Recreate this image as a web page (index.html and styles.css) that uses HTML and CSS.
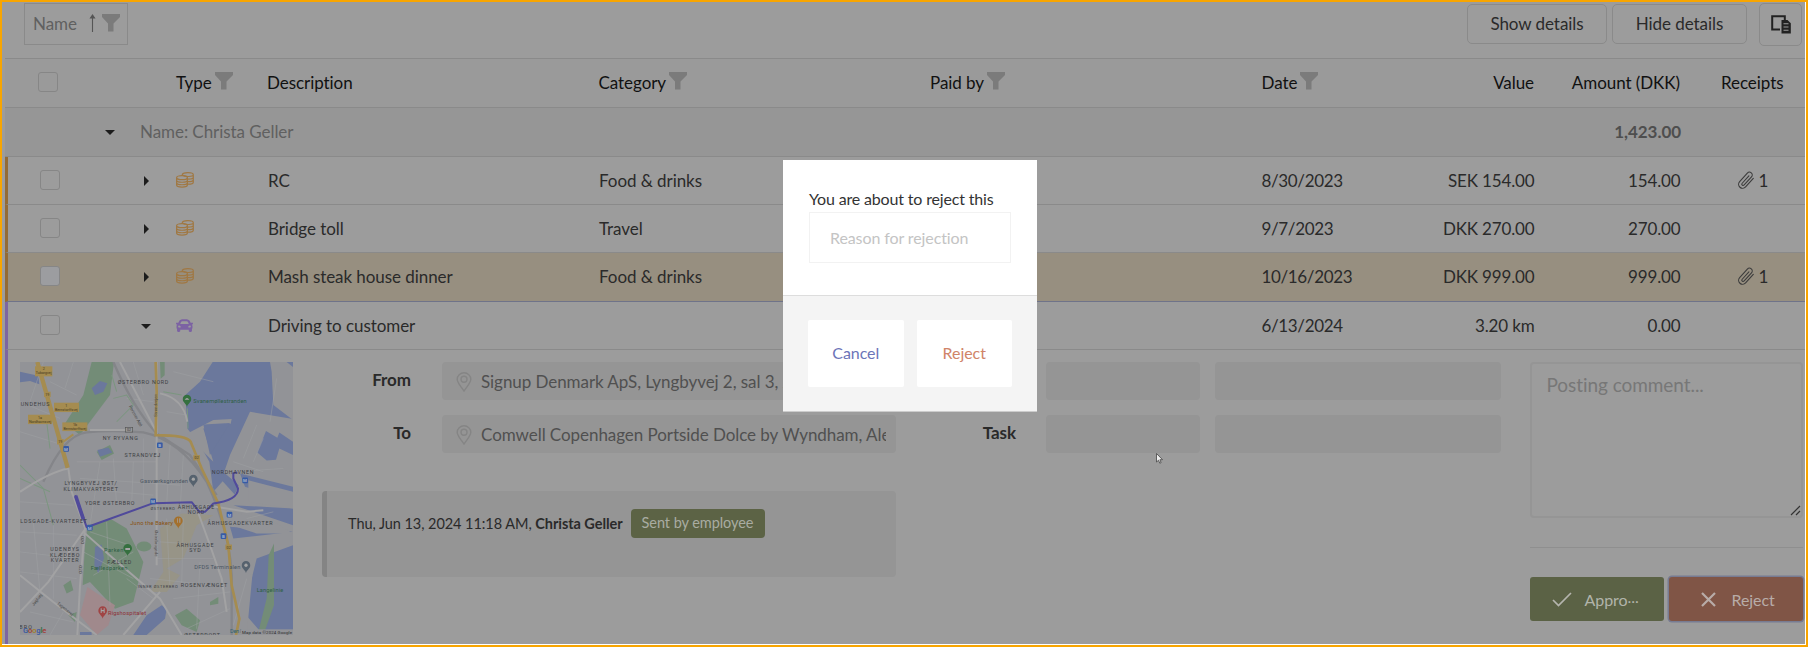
FILE: index.html
```html
<!DOCTYPE html>
<html lang="en">
<head>
<meta charset="utf-8">
<title>Expense approval</title>
<link rel="stylesheet" href="styles.css">
</head>
<body>
<svg class="defs" width="0" height="0">
  <symbol id="funnel" viewBox="0 0 18 18"><path d="M0 0h18v3L11.5 9.500V17.500h-5.500V9.500L0 3z"/></symbol>
  <symbol id="coins" viewBox="0 0 18 16"><g fill="none" stroke="currentColor" stroke-width="1.200"><ellipse cx="6" cy="5.700" rx="5.400" ry="2"/><path d="M.6 5.700v7.300c0 2.700 10.800 2.700 10.800 0V5.700M.6 8.200c0 2.700 10.800 2.700 10.800 0M.6 10.700c0 2.700 10.800 2.700 10.800 0"/><path d="M6.300 3.200V2.700C6.300 0 17.300 0 17.300 2.700v7.500c0 1-2.300 2-5.300 2M6.800 3.300c2 1.700 10.500 1.600 10.500-.5M12 7.100c3 0 5.300-.7 5.300-1.900M12 9.700c3 0 5.300-.8 5.300-2"/></g></symbol>
  <symbol id="car" viewBox="0 64 512 384"><path d="M499.990 176h-59.870l-16.640-41.600C406.380 91.630 365.570 64 319.500 64h-127c-46.060 0-86.880 27.630-103.990 70.400L71.870 176H12.010C4.200 176-1.530 183.340.37 190.910l6 24C7.700 220.250 12.500 224 18.010 224h20.070C24.650 235.730 16 252.780 16 272v48c0 16.120 6.160 30.670 16 41.930V416c0 17.670 14.330 32 32 32h32c17.670 0 32-14.330 32-32v-32h256v32c0 17.670 14.330 32 32 32h32c17.670 0 32-14.330 32-32v-54.070c9.840-11.250 16-25.800 16-41.930v-48c0-19.220-8.650-36.270-22.070-48H494c5.510 0 10.310-3.750 11.640-9.090l6-24c1.890-7.570-3.840-14.910-11.650-14.910zm-352.060-17.830c7.290-18.220 24.940-30.170 44.570-30.170h127c19.630 0 37.280 11.950 44.570 30.170L384 208H128l19.930-49.830zM96 319.800c-19.200 0-32-12.760-32-31.900S76.800 256 96 256s48 28.710 48 47.850-28.800 15.950-48 15.950zm320 0c-19.200 0-48 3.190-48-15.950S396.800 256 416 256s32 12.760 32 31.900-12.800 31.900-32 31.900z"/></symbol>
  <symbol id="clip" viewBox="0 0 17 18"><path d="M4 -6V5.500a4 4 0 0 1-8 0V-6a2.800 2.800 0 0 1 5.600 0V5a1.300 1.300 0 0 1-2.600 0V-5" transform="translate(8.300 9.200) rotate(42)" fill="none" stroke="currentColor" stroke-width="1.100" stroke-linecap="round"/></symbol>
  <symbol id="pin" viewBox="0 0 16 20"><path d="M8 19C5 14.500 1.200 11 1.200 7.300a6.800 6.500 0 0 1 13.600 0C14.800 11 11 14.500 8 19z" fill="none" stroke="currentColor" stroke-width="1.400"/><circle cx="8" cy="7.300" r="3" fill="none" stroke="currentColor" stroke-width="1.400"/></symbol>
  <symbol id="drop" viewBox="-14 -15 28 40"><path d="M0 24C-2 14-13 10-13 0a13 13 0 0 1 26 0C13 10 2 14 0 24z"/></symbol>
</svg>

<div class="frame">
  <div class="page">
    <div class="toolbar">
      <div class="group-chip"><span>Name</span><svg class="sort" viewBox="0 0 7 18"><path d="M3.500 18V3M3.500 1 1.500 4h4z" fill="currentColor" stroke="currentColor" stroke-width="1.100"/></svg><svg class="funnel"><use href="#funnel"/></svg></div>
      <div class="tools">
        <div class="btn show">Show details</div>
        <div class="btn hide">Hide details</div>
        <div class="btn chooser"><svg viewBox="0 0 20 19" width="20" height="19"><path d="M9 14.500H1.200V1.200h12.600V5" fill="none" stroke="#222" stroke-width="2"/><path d="M10.500 5h6l3.300 3.300V18.500h-9.300z" fill="#222"/><path d="M12.500 8.700h5M12.500 12h5M12.500 15.300h5" stroke="#9c9c9c" stroke-width="1.100"/></svg></div>
      </div>
    </div>

    <div class="row head">
      <div class="cell pick"><i class="box"></i></div>
      <div class="cell"></div>
      <div class="cell">Type<svg class="funnel"><use href="#funnel"/></svg></div>
      <div class="cell">Description</div>
      <div class="cell">Category<svg class="funnel"><use href="#funnel"/></svg></div>
      <div class="cell">Paid by<svg class="funnel"><use href="#funnel"/></svg></div>
      <div class="cell">Date<svg class="funnel"><use href="#funnel"/></svg></div>
      <div class="cell num">Value</div>
      <div class="cell num">Amount (DKK)</div>
      <div class="cell rec">Receipts</div>
    </div>

    <div class="group">
      <i class="caret down"></i><span class="gname">Name: Christa Geller</span><span class="gsum">1,423.00</span>
    </div>

    <div class="row item">
      <div class="cell pick"><i class="box"></i></div><div class="cell exp"><i class="caret"></i></div>
      <div class="cell"><svg class="coins"><use href="#coins"/></svg></div>
      <div class="cell">RC</div><div class="cell">Food &amp; drinks</div><div class="cell"></div><div class="cell date">8/30/2023</div>
      <div class="cell num">SEK 154.00</div><div class="cell num">154.00</div>
      <div class="cell clipc"><svg class="clip"><use href="#clip"/></svg>1</div>
    </div>
    <div class="row item">
      <div class="cell pick"><i class="box"></i></div><div class="cell exp"><i class="caret"></i></div>
      <div class="cell"><svg class="coins"><use href="#coins"/></svg></div>
      <div class="cell">Bridge toll</div><div class="cell">Travel</div><div class="cell"></div><div class="cell date">9/7/2023</div>
      <div class="cell num">DKK 270.00</div><div class="cell num">270.00</div><div class="cell"></div>
    </div>
    <div class="row item marked">
      <div class="cell pick"><i class="box"></i></div><div class="cell exp"><i class="caret"></i></div>
      <div class="cell"><svg class="coins"><use href="#coins"/></svg></div>
      <div class="cell">Mash steak house dinner</div><div class="cell">Food &amp; drinks</div><div class="cell"></div><div class="cell date">10/16/2023</div>
      <div class="cell num">DKK 999.00</div><div class="cell num">999.00</div>
      <div class="cell clipc"><svg class="clip"><use href="#clip"/></svg>1</div>
    </div>
    <div class="row item drive">
      <div class="cell pick"><i class="box"></i></div><div class="cell exp"><i class="caret down"></i></div>
      <div class="cell"><svg class="car"><use href="#car"/></svg></div>
      <div class="cell">Driving to customer</div><div class="cell"></div><div class="cell"></div><div class="cell date">6/13/2024</div>
      <div class="cell num">3.20 km</div><div class="cell num">0.00</div><div class="cell"></div>
    </div>

    <div class="detail">
      <svg class="map" viewBox="60 51 819 818" width="273" height="273" preserveAspectRatio="none">
        <rect x="60" y="51" width="819" height="818" fill="#929397"/>
        <g fill="#6b789c">
          <path d="M638 51H879V330L838 310 828 344 800 346 772 322 798 258 832 278 838 262 879 290V222L750 200 690 330 672 382 716 420 704 448 668 408 640 440 628 350 600 300 562 250 556 150 600 110z"/>
          <path d="M720 385 879 425V470L735 425zM700 480 879 490V540L760 500zM690 545 879 560V600L770 640 730 800 790 869H879V560L700 580z"/>
          <path d="M60 80 115 92 118 118 90 108 60 112zM440 810 485 780 500 790 495 820 440 869H400zM240 860h35v9h-35z"/>
        </g>
        <g fill="#929397">
          <path d="M810 51H860L879 66V225L820 180 815 80zM700 500 830 535 879 565 770 565 695 540zM745 405 879 440 879 490 745 470zM695 640 725 640 740 680 757 690 740 869H690zM562 265 640 225 695 222 692 236 610 250 640 350 590 300z"/>
          <path d="M610 238 690 234 630 330z" fill="#6b789c"/>
        </g>
        <g fill="#738c77">
          <path d="M275 51H342L330 150 240 270 195 235 250 150zM263 545 330 520 380 550 430 650 400 770 345 790 270 710 248 720 255 600z"/>
          <ellipse cx="432" cy="604" rx="22" ry="15"/>
          <path d="M806 630 822 595V780L790 869 775 860 800 760zM190 720 212 705 220 735 200 745zM525 810 560 790 600 825 590 860 545 840zM205 810 230 800 225 830zM630 770l25-15v20l-25 5zM480 51h14v40l-12 10zM290 320 330 300 342 325 305 345z"/>
          <path d="M292 315 325 307 337 322 300 335zM275 130 300 108 322 115 310 140 285 150zM285 605 305 598 312 640 295 685 283 660z" fill="#6b789c"/>
        </g>
        <path d="M262 725 345 780 325 840 290 869 240 810z" fill="#a0898c"/>
        <path d="M480 550 545 505 640 510 590 540 550 640 500 670 540 690 500 740 450 740 490 680z" fill="#979487"/>
        <g fill="none" stroke="#a0a1a4" stroke-width="2" opacity=".7">
          <path d="M60 170 180 220M60 260 190 300M150 110 230 150M130 51 90 170M220 51 195 130M230 350 470 350M240 400 540 420M240 430 460 450M300 350 270 540M340 340 350 480M400 350 395 480M430 280 430 470M510 300 500 480M550 330 540 500M60 560 230 570M60 620 230 640M60 680 230 700M100 530 120 740M160 520 160 760M60 470 220 480M500 520 510 730M550 520 545 720M600 650 590 850M470 640 640 640M480 590 630 600M450 700 640 720M520 760 690 740M560 850 690 790M90 800 220 830M150 869 190 800M520 80 640 110M500 200 560 210M380 160 460 170M400 51 430 150M700 350 790 380M770 240 730 340M830 100 810 230M700 380 850 370M790 280 760 350M820 500 740 520M380 700 460 760M740 700 700 840M270 560 390 600M280 690 400 620M250 620 400 700M320 530 330 780"/>
        </g>
        <g fill="none" stroke="#7b967f" stroke-width="3"><path d="M60 360 130 430 160 540M60 400 150 440M140 230 150 310M340 160 380 150 400 180 350 230M335 90 350 140M490 140 545 150M562 190 564 250"/></g>
        <g fill="none" stroke="#848589" stroke-width="7"><path d="M130 410Q190 270 260 262T430 262Q540 285 620 410 690 560 695 690V869M340 51Q400 190 470 265L570 330 650 450"/></g>
        <g fill="none" stroke="#a2a2a3">
          <path d="M60 440Q150 380 205 370L215 440 255 548 240 720 232 869M250 560 340 640 480 760 545 869M60 690 160 770 290 869M60 800 145 710 255 552M360 51 470 262M470 51V600L470 660M590 490 630 600 665 700 680 800M270 255H385M480 145Q550 160 562 230M370 869 480 740M620 480 740 500 790 495" stroke-width="6"/>
        </g>
        <g fill="none" stroke="#a58c50"><path d="M112 51 175 270 203 368" stroke-width="13"/><path d="M467 51 470 140 467 270Q560 270 572 290L605 370 655 475 685 600 695 720 718 820 708 869" stroke-width="8"/><path d="M190 290 220 268" stroke-width="6"/></g>
        <g stroke="#504a9b" fill="none" stroke-linejoin="round"><path d="M226 450 260 546 460 474 575 471 598 500 615 500 640 475Q715 465 714 430L700 400V384L712 382" stroke-width="6"/><path d="M227 452 250 522" stroke-width="11"/></g>
        <g class="sign"><rect x="105" y="64" width="52" height="30"/><rect x="162" y="173" width="75" height="28"/><rect x="84" y="209" width="72" height="28"/><rect x="187" y="232" width="75" height="26"/><rect x="132" y="140" width="20" height="16"/><rect x="171" y="282" width="20" height="16"/><rect x="580" y="330" width="20" height="16"/><rect x="676" y="598" width="20" height="16"/></g>
        <g class="tiny"><text x="131" y="88">Tuborgvej</text><text x="131" y="75">2</text><text x="199" y="199">Bernstorffsvej</text><text x="199" y="185">1</text><text x="120" y="235">Nordhavnsvej</text><text x="120" y="221">1a</text><text x="225" y="256">Bernstorffsvej</text><text x="225" y="243">1b</text><text x="142" y="153">19</text><text x="181" y="295">19</text><text x="590" y="343">02</text><text x="686" y="611">02</text></g>
        <rect x="376" y="247" width="22" height="14" fill="#999" stroke="#555" stroke-width="2"/><text x="387" y="259" class="tinyd">02</text>
        <g fill="#365ba5"><rect x="190" y="303" width="17" height="17" rx="3"/><rect x="471" y="292" width="17" height="17" rx="3"/><rect x="451" y="460" width="17" height="17" rx="3"/><rect x="261" y="539" width="17" height="17" rx="3"/><rect x="727" y="397" width="17" height="17" rx="3"/><rect x="680" y="500" width="17" height="17" rx="3"/><rect x="662" y="564" width="17" height="17" rx="3"/></g>
        <g class="metro"><text x="198" y="317">M</text><text x="479" y="306">B</text><text x="459" y="474">M</text><text x="269" y="553">M</text><text x="735" y="411">M</text><text x="688" y="514">M</text><text x="670" y="578">B</text></g>
        <g class="area">
          <text x="429" y="118" textLength="152">ØSTERBRO NORD</text><text x="105" y="182" textLength="86">UNDEHUS</text><text x="361" y="286" textLength="105">NY RYVANG</text><text x="427" y="335" textLength="107">STRANDVEJ</text><text x="272" y="421" textLength="157">LYNGBYVEJ ØST/</text><text x="272" y="438" textLength="163">KLIMAKVARTERET</text><text x="329" y="480" textLength="148">YDRE ØSTERBRO</text><text x="161" y="533" textLength="200">LDSGADE-KVARTERET</text><text x="194" y="617" textLength="86">UDENBYS</text><text x="194" y="634" textLength="88">KLÆDEBO</text><text x="194" y="650" textLength="84">KVARTER</text><text x="358" y="655" textLength="72">FÆLLED</text><text x="588" y="490" textLength="109">ÅRHUSGADE</text><text x="588" y="505" textLength="50">NORD</text><text x="698" y="386" textLength="126">NORDHAVNEN</text><text x="720" y="538" textLength="195">ÅRHUSGADEKVARTER</text><text x="585" y="604" textLength="111">ÅRHUSGADE</text><text x="585" y="620" textLength="34">SYD</text><text x="612" y="726" textLength="139">ROSENVÆNGET</text><text x="606" y="876" textLength="107">ØSTERPORT</text><text x="77" y="852" textLength="38">BRO</text>
          <text class="sm" x="488" y="495" textLength="73">ØSTERBRO</text><text class="sm" x="473" y="727" textLength="120">INNER ØSTERBRO</text>
        </g>
        <g class="street"><text transform="translate(472 215) rotate(-90)">Strandvejen</text><text transform="translate(386 184) rotate(61)">Perimer Allé</text><text transform="translate(464 555) rotate(90)">Østerbrogade</text><text transform="translate(243 572) rotate(90)">O2O</text><text transform="translate(238 660) rotate(90)">O2O</text><text transform="translate(101 783) rotate(-52)">Jagtvej</text><text transform="translate(170 776) rotate(38)">Tagensvej</text></g>
        <g><use href="#drop" x="547" y="147" width="28" height="40" fill="#35703f"/><use href="#drop" x="369" y="594" width="28" height="40" fill="#35703f"/><use href="#drop" x="566" y="387" width="28" height="40" fill="#56626e"/><use href="#drop" x="724" y="645" width="28" height="40" fill="#56626e"/><use href="#drop" x="521" y="512" width="28" height="40" fill="#a4702c"/><use href="#drop" x="294" y="781" width="28" height="40" fill="#a04444"/></g>
        <g fill="#a5a5a5"><circle cx="580" cy="402" r="5"/><circle cx="738" cy="660" r="5"/><path d="M554 164q7-11 14 0zM376 608h14v6h-14zM531 519h2v14h-2zM538 519h3v14h-3zM302 789h3v5h6v-5h3v14h-3v-5h-6v5h-3z"/></g>
        <g class="poi"><text x="580" y="175" textLength="160" fill="#2f6046">Svanemøllestranden</text><text x="420" y="414" textLength="144" fill="#4a5562">Gasværksgrunden</text><text x="391" y="539" textLength="128" fill="#885010">Juno the Bakery</text><text x="312" y="621" textLength="58" fill="#2f6046">Parken</text><text x="272" y="675" textLength="110" fill="#2f6046">Fælledparken</text><text x="583" y="671" textLength="138" fill="#4a5562">DFDS Terminalen</text><text x="324" y="808" textLength="114" fill="#8c3036">Rigshospitalet</text><text x="770" y="741" textLength="80" fill="#2f6046">Langelinie</text><text x="690" y="862" textLength="34" fill="#2d6270">Den l</text></g>
        <rect x="722" y="852" width="157" height="17" fill="#929397"/><text x="726" y="865" textLength="150" class="credit">Map data ©2024 Google</text>
        <text x="69" y="863" class="google" textLength="70"><tspan fill="#3758a0">G</tspan><tspan fill="#a23a33">o</tspan><tspan fill="#a1801c">o</tspan><tspan fill="#3758a0">g</tspan><tspan fill="#32713f">l</tspan><tspan fill="#a23a33">e</tspan></text>
      </svg>

      <div class="trip">
        <div class="field"><label>From</label><div class="input"><svg class="pin"><use href="#pin"/></svg><span>Signup Denmark ApS, Lyngbyvej 2, sal 3, 2100 København</span></div></div>
        <div class="field"><label>To</label><div class="input"><svg class="pin"><use href="#pin"/></svg><span>Comwell Copenhagen Portside Dolce by Wyndham, Alexandriagade</span></div></div>
        <div class="log"><span class="when">Thu, Jun 13, 2024 11:18 AM, <b>Christa Geller</b></span><span class="badge">Sent by employee</span></div>
      </div>

      <div class="dims">
        <label></label><div class="input"></div><div class="input"></div>
        <label>Task</label><div class="input"></div><div class="input"></div>
      </div>

      <div class="decide">
        <div class="comment">Posting comment...<svg class="grip" viewBox="0 0 11 11"><path d="M1 10 10 1M6 10l4-4" stroke="#333" stroke-width="1.200"/></svg></div>
        <div class="rule"></div>
        <div class="actions">
          <div class="act ok"><svg width="20" height="15" viewBox="0 0 20 15"><path d="M1 8l5.500 5.500L19 1" fill="none" stroke="#b5b5ae" stroke-width="1.700"/></svg><span>Appro<span class="dots">...</span></span></div>
          <div class="act no"><svg width="15" height="15" viewBox="0 0 15 15"><path d="M1 1l13 13M14 1 1 14" fill="none" stroke="#b8aca8" stroke-width="2.200"/></svg><span>Reject</span></div>
        </div>
      </div>
    </div>
  </div>
</div>

<div class="modal">
  <div class="modal-body">
    <div class="msg">You are about to reject this</div>
    <div class="reason">Reason for rejection</div>
  </div>
  <div class="modal-foot"><div class="mbtn cancel">Cancel</div><div class="mbtn reject">Reject</div></div>
</div>
<svg class="cursor" viewBox="0 0 7 11"><path d="M.5.5v8.500l2-1.800 1.300 3 1.300-.6L3.900 6.700h2.600z" fill="#eee" stroke="#444" stroke-width=".8"/></svg>
</body>
</html>
```

FILE: styles.css
```css
* { box-sizing: border-box; }
body { margin: 0; font-family: Lato, sans-serif; font-size: 17px; letter-spacing: -.06px; color: #2a2a2a; overflow: hidden; }
.defs { position: absolute; }
.frame { width: 1808px; height: 647px; border: 2px solid #f8a500; background: #fff; }
.page { width: 1803px; height: 642px; background: #9c9c9c; padding-left: 3px; display: flex; flex-direction: column; }

.toolbar { height: 57px; border-bottom: 1px solid #8a8a8a; display: flex; justify-content: space-between; align-items: flex-start; padding: 1px 3px 0 19px; flex: none; }
.group-chip { width: 104px; height: 42px; border: 1px solid #8a8a8a; display: flex; align-items: center; padding: 0 0 1px 8px; color: #606060; }
.sort { width: 7px; height: 18px; margin: 0 6px 1px 12px; color: #555; flex: none; }
.funnel { width: 18px; height: 18px; fill: #7b7b7b; flex: none; margin-bottom: 2px; }
.row .funnel { margin-left: 3px; }
.tools { display: flex; }
.btn { border: 1px solid #8a8a8a; border-radius: 5px; display: flex; align-items: center; justify-content: center; height: 40px; margin-top: 1px; padding-bottom: 2px; }
.show { width: 140px; margin-right: 5px; }
.hide { width: 135px; margin-right: 12px; }
.chooser { width: 43px; height: 43px; margin-top: 0; padding-bottom: 0; }

.row { display: grid; grid-template-columns: 130px 41px 91px 331.5px 331.5px 331.5px 133px 139.5px 146px 1fr; height: 48px; border-bottom: 1px solid #8a8a8a; flex: none; }
.cell { display: flex; align-items: center; white-space: nowrap; padding-bottom: 1px; }
.num { justify-content: flex-end; }
.head { height: 49px; color: #111; background: #9a9a9a; }
.head .cell { padding-bottom: 2px; }
.rec { padding-left: 41px; }
.box { width: 20px; height: 20px; border: 1px solid #868686; border-radius: 3px; margin-left: 33px; }
.group { height: 49px; background: #969696; border-bottom: 1px solid #8a8a8a; display: flex; align-items: center; color: #606060; flex: none; padding: 0 124px 1px 100px; }
.gname { margin-left: 25px; flex: 1; }
.gsum { font-weight: bold; color: #4e4e4e; }
.caret { width: 0; height: 0; border: 5px solid transparent; border-left-color: #1c1c1c; border-right: 0; position: relative; top: 1px; }
.caret.down { border: 5px solid transparent; border-top-color: #1c1c1c; border-bottom: 0; }
.item { border-left: 3px solid #946b35; grid-template-columns: 127px 41px 92px 331px 331.5px 331px 132.500px 140.5px 146px 1fr; }
.item .box { margin-left: 32px; }
.item .exp { padding-left: 9px; }
.item .caret.down { margin-left: -3px; }
.date { letter-spacing: -.35px; }
.item .num { letter-spacing: -.15px; }
.marked { background: #978f80; height: 49px; border-bottom-color: #6f7389; }
.marked .cell { padding-bottom: 2px; }
.marked .box { background: #9c9da0; }
.drive { border-left-color: #7d66a0; }
.coins { width: 18px; height: 16px; color: #a07843; margin-bottom: 1px; }
.car { width: 17px; height: 13px; fill: #7c62a3; }
.clipc { padding-left: 57px; }
.clip { width: 17px; height: 18px; margin-right: 4px; color: #3c3c3c; }

.detail { flex: 1; border-left: 3px solid #7d66a0; padding: 12px 3px 0 12px; display: flex; align-items: flex-start; }
.map { flex: none; margin-right: 29px; font-family: Roboto, sans-serif; letter-spacing: 0; }
.area text { font-size: 16px; font-weight: 400; fill: #3c3e42; text-anchor: middle; }
.area .sm { font-size: 12px; }
.sign rect { fill: #a58c50; }
.tiny text { font-size: 11px; fill: #44381c; text-anchor: middle; }
.tinyd { font-size: 11px; fill: #333; text-anchor: middle; }
.metro text { font-size: 13px; fill: #a9b4c8; text-anchor: middle; font-weight: bold; }
.street text { font-size: 13px; fill: #4a4a4a; }
.poi text { font-size: 17px; }
.credit { font-size: 13px; fill: #2a2a2a; }
.google { font-size: 23px; font-weight: 500; }

.trip { width: 574px; flex: none; }
.field { display: flex; height: 38px; margin-bottom: 15px; }
.field label { width: 89px; margin-right: 31px; text-align: right; line-height: 35px; font-weight: bold; }
.input { background: #959595; border-radius: 4px; }
.field .input { flex: 1; min-width: 0; display: flex; align-items: center; padding: 0 10px 0 14px; color: #505050; }
.field span { flex: 1; overflow: hidden; white-space: nowrap; }
.pin { width: 16px; height: 20px; color: #858585; margin: 2px 9px 0 0; flex: none; }
.log { height: 86px; margin-top: 38px; background: #959595; border-left: 5px solid #848484; border-radius: 4px; padding: 18px 0 0 21px; display: flex; align-items: flex-start; font-size: 14.500px; }
.when { line-height: 29px; margin-right: 8px; white-space: nowrap; }
.badge { width: 134px; height: 29px; line-height: 28px; text-align: center; background: #5c6345; color: #a9aca2; border-radius: 4px; }

.dims { display: grid; grid-template-columns: 134.500px 154px 286px; grid-auto-rows: 38px; row-gap: 15px; column-gap: 15px; margin-right: 29px; flex: none; }
.dims label { width: 120px; text-align: right; line-height: 35px; font-weight: bold; }

.decide { width: 273px; flex: none; }
.comment { position: relative; height: 156px; border: 2px solid #959595; border-radius: 4px; padding: 9px 0 0 15px; font-size: 19px; line-height: 24px; color: #777; }
.grip { position: absolute; right: 0; bottom: 0; width: 11px; height: 11px; }
.rule { height: 1px; background: #8f8f8f; margin: 29px 0; }
.actions { display: flex; gap: 5px; }
.act { width: 134px; height: 44px; border-radius: 3px; display: flex; align-items: center; font-size: 16px; }
.act.ok { background: #5b6245; color: #b1b4aa; padding-left: 22px; gap: 13px; }
.act.no { background: #805546; color: #b8aca8; padding-left: 32px; gap: 16px; box-shadow: 0 0 0 1.500px #777b92; }
.dots { position: relative; top: -3px; }

.modal { position: absolute; left: 783px; top: 160px; width: 254px; height: 252px; background: #fff; border-bottom: 1px solid #ccc; font-size: 16px; }
.modal-body { height: 136px; border-bottom: 1px solid #ddd; padding: 28px 26px 0; }
.msg { line-height: 22px; height: 24px; color: #333; white-space: nowrap; letter-spacing: -.16px; }
.reason { width: 202px; height: 51px; border: 1px solid #f2f2f2; line-height: 49px; padding-left: 20px; color: #c4c4c4; letter-spacing: -.1px; }
.modal-foot { height: 115px; background: #f4f4f4; display: flex; align-items: flex-start; gap: 13px; padding: 24px 25px 0; }
.mbtn { height: 67px; line-height: 66px; text-align: center; background: #fff; border-radius: 2px; flex: 1; }
.cancel { color: #6b74b8; }
.reject { color: #d08468; }
.cursor { position: absolute; left: 1156px; top: 453px; width: 7px; height: 11px; }
```
